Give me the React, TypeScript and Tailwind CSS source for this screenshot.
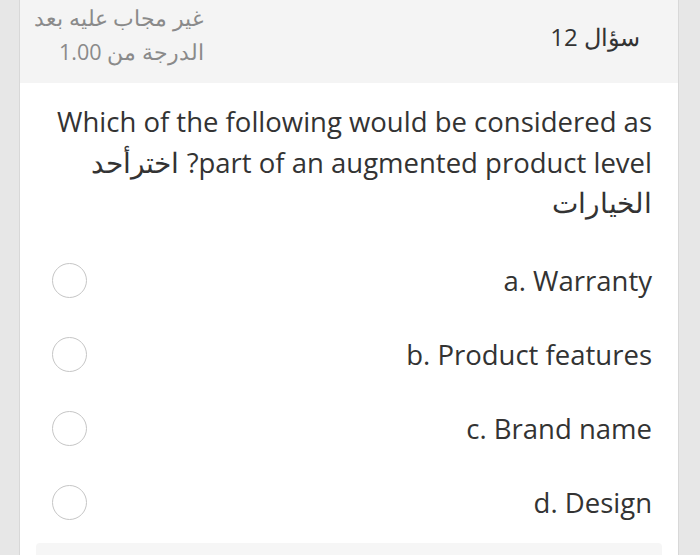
import React from "react";

const options = ["a. Warranty", "b. Product features", "c. Brand name", "d. Design"];

function Radio() {
  return (
    <span className="block h-[35px] w-[35px] shrink-0 rounded-full border-[1.5px] border-[#c6c6c6] bg-white" />
  );
}

export default function App() {
  return (
    <div
      className="flex h-[555px] w-[700px] overflow-hidden bg-[#e7e7e7]"
      style={{ fontFamily: '"Open Sans", "Noto Sans", sans-serif' }}
    >
      <div className="ml-[19px] flex w-[660px] flex-col border-x border-[#d8d8d8] bg-white">
        {/* question header */}
        <div className="flex h-[83px] shrink-0 items-start justify-between bg-[#f4f4f4]">
          <div dir="rtl" className="ml-[14px] pt-[1px] text-right text-[21.5px] leading-[34px] text-[#8a8a8a]">
            <div>غير مجاب عليه بعد</div>
            <div>الدرجة من 1.00</div>
          </div>
          <div dir="rtl" className="mr-[38px] pt-[20px] text-[24px] leading-[34px] text-[#333]">
            سؤال 12
          </div>
        </div>

        {/* question text */}
        <div dir="rtl" className="pl-[30px] pr-[26px] pt-[19px] text-[27.5px] leading-[40.5px] text-[#333]">
          Which of the following would be considered as part of an augmented product level? اخترأحد الخيارات
        </div>

        {/* answers */}
        <div className="mt-[20px] flex flex-col">
          {options.map((o) => (
            <div key={o} className="flex h-[74px] items-center justify-between pl-[32px] pr-[26px]">
              <Radio />
              <span className="text-[27.5px] text-[#333]">{o}</span>
            </div>
          ))}
        </div>

        <div className="mx-[16px] mt-[3px] h-[20px] rounded-t-[4px] bg-[#f6f6f6]" />
      </div>
    </div>
  );
}
